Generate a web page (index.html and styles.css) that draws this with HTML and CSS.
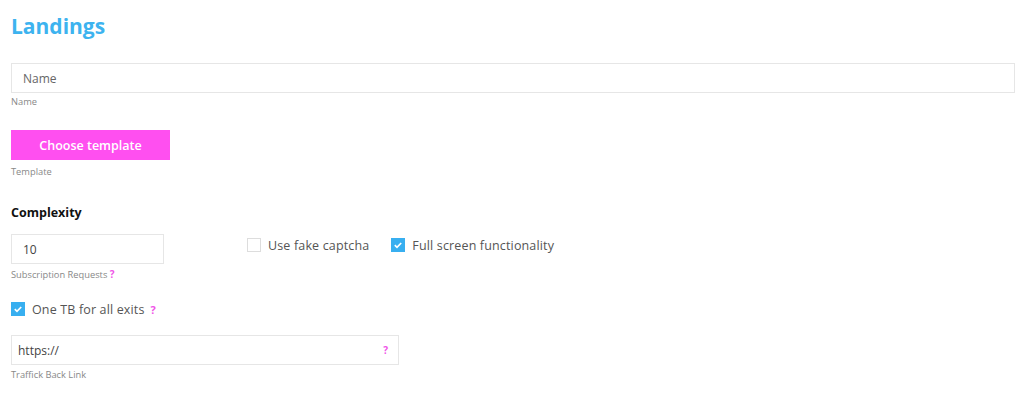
FILE: index.html
```html
<!DOCTYPE html>
<html>
<head>
    <title>Landings</title>
    <link rel="stylesheet" href="styles.css">
</head>
<body>
    <div class="page">
        <h1 class="title">Landings</h1>

        <div class="field name-field">
            <input type="text" class="input wide" placeholder="Name">
            <div class="hint">Name</div>
        </div>

        <div class="field template-field">
            <button type="button" class="btn-template">Choose template</button>
            <div class="hint">Template</div>
        </div>

        <h3 class="section">Complexity</h3>

        <div class="row">
            <div class="field">
                <input type="text" class="input short" value="10">
                <div class="hint">Subscription Requests <span class="help">?</span></div>
            </div>
            <div class="checks">
                <label class="check"><span class="box"></span>Use fake captcha</label>
                <label class="check"><span class="box on"></span>Full screen functionality</label>
            </div>
        </div>

        <label class="check single"><span class="box on"></span>One TB for all exits <span class="help">?</span></label>

        <div class="field">
            <div class="input-wrap">
                <input type="text" class="input link" value="https://">
                <span class="help inside">?</span>
            </div>
            <div class="hint">Traffick Back Link</div>
        </div>
    </div>
</body>
</html>
```

FILE: styles.css
```css
body {
    margin: 0;
    font-family: "Open Sans", Arial, sans-serif;
    color: #333;
    background: #fff;
}
.page {
    padding: 12px 9px 0 11px;
}
.title {
    margin: 0 0 23px;
    font-size: 21px;
    font-weight: 700;
    color: #3db3ef;
    line-height: 28px;
}
.field {
    margin-bottom: 0;
}
.name-field {
    margin-bottom: 22px;
}
.template-field .hint {
    margin-top: 6px;
}
.input {
    display: block;
    box-sizing: border-box;
    height: 30px;
    padding: 0 11px;
    border: 1px solid #e6e6e6;
    font-family: inherit;
    font-size: 12px;
    color: #444;
    outline: none;
}
.input::placeholder {
    color: #666;
}
.wide {
    width: 100%;
}
.short {
    width: 153px;
}
.hint {
    margin-top: 3px;
    font-size: 9.3px;
    color: #888;
    line-height: 12px;
}
.help {
    color: #f055e8;
    font-weight: 700;
    font-size: 10px;
}
.btn-template {
    display: block;
    width: 159px;
    height: 30px;
    border: none;
    background: #ff4ff0;
    color: #fff;
    font-family: inherit;
    font-size: 12.5px;
    font-weight: 600;
    cursor: pointer;
}
.section {
    margin: 27px 0 13px;
    font-size: 12.5px;
    font-weight: 700;
    color: #111;
    line-height: 16px;
}
.row {
    display: flex;
    align-items: flex-start;
    gap: 83px;
}
.row .hint {
    margin-top: 4px;
}
.checks {
    display: flex;
    gap: 22px;
    padding-top: 2px;
}
.check {
    display: flex;
    align-items: center;
    gap: 7px;
    height: 16px;
    font-size: 12.5px;
    letter-spacing: 0.15px;
    color: #555;
    margin-top: 1px;
}
.check .help {
    margin-left: -1px;
    font-size: 11px;
}
.single {
    margin: 20px 0 18px;
}
.box {
    box-sizing: border-box;
    width: 14px;
    height: 14px;
    border: 1px solid #ddd;
    background: #fff;
}
.box.on {
    border: none;
    background: #38aff0 url("data:image/svg+xml,%3Csvg xmlns='http://www.w3.org/2000/svg' viewBox='0 0 14 14'%3E%3Cpath d='M3.8 7.2l2.2 2.1 4.2-4.3' fill='none' stroke='%23fff' stroke-width='1.7'/%3E%3C/svg%3E") no-repeat center;
}
.input-wrap {
    position: relative;
    width: 388px;
}
.link {
    width: 100%;
    padding-left: 6px;
}
.inside {
    position: absolute;
    right: 11px;
    top: 8px;
}
.input-wrap + .hint {
    margin-top: 4px;
}
```
